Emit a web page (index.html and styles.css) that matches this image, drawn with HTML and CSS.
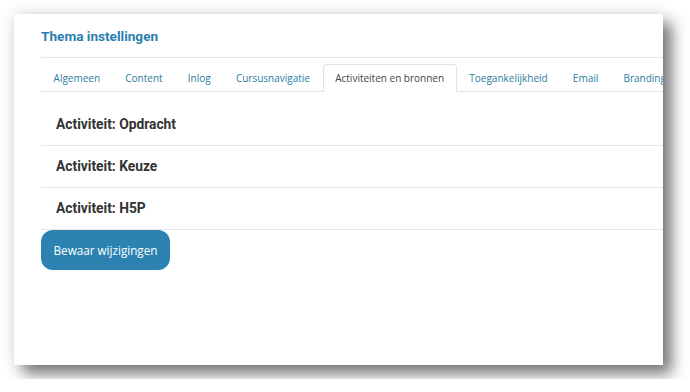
FILE: index.html
```html
<!DOCTYPE html>
<html lang="nl">
<head>
    <meta charset="UTF-8">
    <meta name="viewport" content="width=device-width, initial-scale=1.0">
    <title>Thema instellingen</title>
    <link rel="stylesheet" href="styles.css">
</head>
<body>
    <!-- Settings card -->
    <section class="card">
        <h2 class="cardTitle">Thema instellingen</h2>

        <ul class="tabs">
            <li class="tab">Algemeen</li>
            <li class="tab">Content</li>
            <li class="tab">Inlog</li>
            <li class="tab">Cursusnavigatie</li>
            <li class="tab active">Activiteiten en bronnen</li>
            <li class="tab">Toegankelijkheid</li>
            <li class="tab">Email</li>
            <li class="tab">Branding</li>
        </ul>

        <div class="sections">
            <h3 class="section">Activiteit: Opdracht</h3>
            <h3 class="section">Activiteit: Keuze</h3>
            <h3 class="section">Activiteit: H5P</h3>
        </div>

        <button class="saveButton">Bewaar wijzigingen</button>
    </section>
</body>
</html>
```

FILE: styles.css
```css
* {
    margin: 0;
    padding: 0;
    box-sizing: border-box;
}

body {
    background-color: #fff;
    font-family: "Open Sans", Arial, sans-serif;
}

.card {
    margin: 14px;
    width: 649px;
    height: 351px;
    padding: 12px 0 0 27px;
    background-color: #fff;
    overflow: hidden;
    box-shadow: 9px 9px 14px rgba(0, 0, 0, 0.5), 0 0 16px rgba(0, 0, 0, 0.12);
}

.cardTitle {
    font-family: Roboto, Arial, sans-serif;
    font-size: 13.6px;
    font-weight: 700;
    line-height: 20px;
    color: #2b7db2;
    padding-bottom: 11px;
    border-bottom: 1px solid #e6e6e6;
}

.tabs {
    list-style: none;
    display: flex;
    margin-top: 6px;
    border-bottom: 1px solid #dee2e6;
    white-space: nowrap;
}

.tab {
    font-size: 10px;
    line-height: 16px;
    padding: 5px 11.6px;
    border: 1px solid transparent;
    border-radius: 4px 4px 0 0;
    margin-bottom: -1px;
    color: #2a7c9f;
}

.tab.active {
    color: #444;
    background-color: #fff;
    border-color: #dee2e6 #dee2e6 #fff;
}

.sections {
    margin-top: 12px;
}

.section {
    font-family: Roboto, Arial, sans-serif;
    font-size: 13.8px;
    font-weight: 700;
    color: #333;
    height: 42px;
    padding: 12px 0 0 15px;
    border-bottom: 1px solid #e8e8e8;
}

.saveButton {
    display: block;
    width: 129px;
    height: 40px;
    border: none;
    border-radius: 12px;
    background-color: #2c83b2;
    color: #fff;
    font-family: "Open Sans", Arial, sans-serif;
    font-size: 11.7px;
}
```
